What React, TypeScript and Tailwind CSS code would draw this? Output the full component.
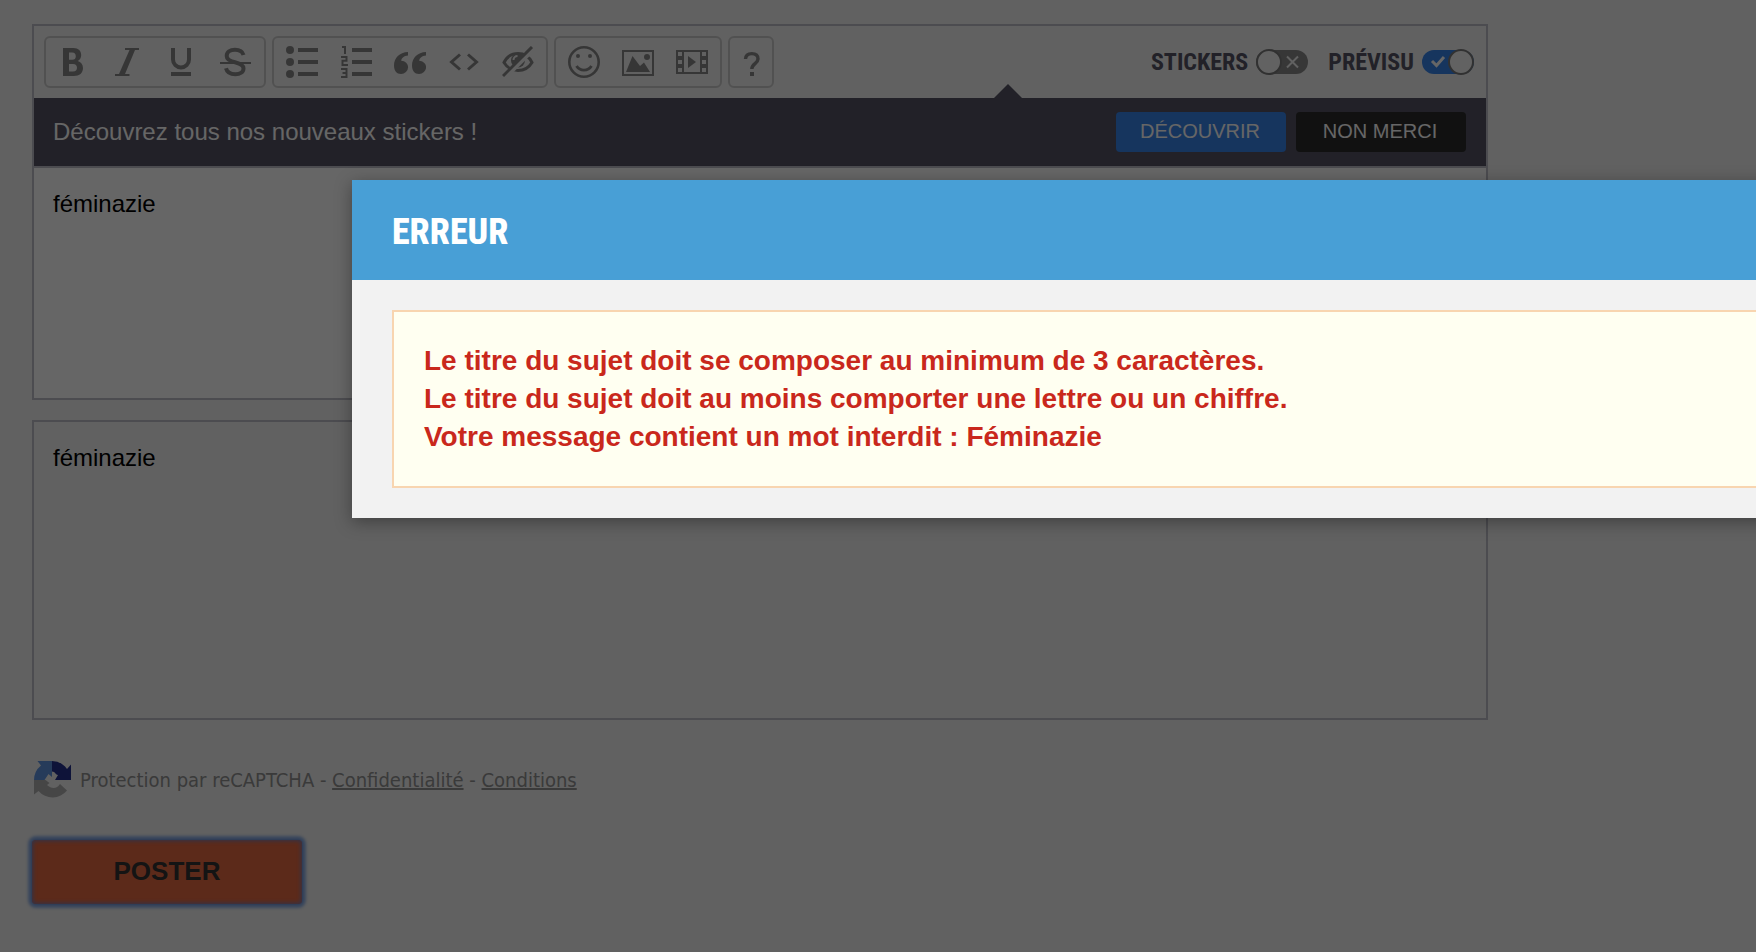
// Modules
import { useState } from "react";
import type { ReactNode } from "react";

type IToolButtonProps = {
  label: string;
  narrow?: boolean;
  children: ReactNode;
};

const ToolButton = ({ label, narrow, children }: IToolButtonProps) => (
  <button
    type="button"
    aria-label={label}
    title={label}
    className={`${
      narrow ? "w-10" : "w-[54px]"
    } h-12 flex items-center justify-center text-[#888888]`}
  >
    <svg
      viewBox="0 0 32 32"
      className="w-8 h-8"
      fill="none"
      stroke="currentColor"
      strokeWidth="4"
    >
      {children}
    </svg>
  </button>
);

const ToolGroup = ({ children }: { children: ReactNode }) => (
  <div className="flex px-px border-2 border-[#cbcbcb] rounded-md">
    {children}
  </div>
);

type ISwitchProps = {
  id: string;
  label: string;
  checked: boolean;
  onChange: () => void;
};

const Switch = ({ id, label, checked, onChange }: ISwitchProps) => (
  <div className="flex items-center gap-2">
    <label
      htmlFor={id}
      className="font-['Roboto_Condensed','Liberation_Sans_Narrow',sans-serif] font-bold text-2xl leading-6 text-[#555364]"
    >
      {label}
    </label>
    <span className="relative w-[52px] h-[26px]">
      <input
        id={id}
        type="checkbox"
        role="switch"
        checked={checked}
        onChange={onChange}
        className="absolute inset-0 w-full h-full opacity-0 cursor-pointer"
      />
      <svg
        viewBox="0 0 52 26"
        className="w-full h-full pointer-events-none"
        fill="none"
      >
        <rect
          x="0"
          y="1"
          width="52"
          height="24"
          rx="12"
          fill={checked ? "#3784eb" : "#8b8b8b"}
        />
        {checked ? (
          <path d="M10 12l4.500 4.500L22 8" stroke="#ffffff" strokeWidth="3" />
        ) : (
          <path d="M31 7.500l11 11M42 7.500l-11 11" stroke="#f2f2f2" strokeWidth="2" />
        )}
        <circle
          cx={checked ? 39 : 13}
          cy="13"
          r="12"
          fill="#f6f6f6"
          stroke="#7c7c7c"
          strokeWidth="2"
        />
      </svg>
    </span>
  </div>
);

const Toolbar = () => (
  <div className="flex gap-1.5">
    <ToolGroup>
      <ToolButton label="Gras">
        <path
          d="M5 2h10.500c5 0 7.700 3 7.700 7 0 3-1.400 5-3.400 6 3 1 5.200 3.400 5.200 7 0 5-3.500 8-9 8H5zM11 6.500v7.300h3.200c2.400 0 3.600-1.300 3.600-3.600s-1.200-3.700-3.600-3.700zM11 18v7.500h4c2.700 0 4-1.300 4-3.700S17.700 18 15 18z"
          fill="currentColor"
          fillRule="evenodd"
          stroke="none"
        />
      </ToolButton>
      <ToolButton label="Italique">
        <path d="M13 2h14v2h-4L13 28h4.500v2H3v-2h4L17.500 4H13z" fill="currentColor" stroke="none" />
      </ToolButton>
      <ToolButton label="Souligné">
        <path d="M7 2v11.500a8 8 0 0 0 16 0V2" />
        <path d="M5 28h20" />
      </ToolButton>
      <ToolButton label="Barré">
        <path d="M23.500 9C22.500 5.500 19 3.800 15 3.800c-5 0-8.300 2.400-8.300 6.200 0 3.500 3 5 8.300 6.200 5.500 1.300 8.500 2.800 8.500 6.200 0 3.600-3.300 5.800-8.200 5.800-4.800 0-8.300-2-9.300-6" strokeWidth="4" />
        <path d="M0 17h31" strokeWidth="2" />
      </ToolButton>
    </ToolGroup>
    <ToolGroup>
      <ToolButton label="Liste à puces">
        <g fill="currentColor" stroke="none">
          <circle cx="4" cy="4" r="4" />
          <circle cx="4" cy="16" r="4" />
          <circle cx="4" cy="28" r="4" />
        </g>
        <path d="M12 4h20M12 16h20M12 28h20" />
      </ToolButton>
      <ToolButton label="Liste numérotée">
        <path d="M2 1h3v7M1 11h5.500v3.800H2.500v4.200H8M1 23h5.500v8H1M2.500 27h4" strokeWidth="2" />
        <path d="M12 4h20M12 16h20M12 28h20" />
      </ToolButton>
      <ToolButton label="Citation">
        <g fill="currentColor" stroke="none">
          <path id="quote" d="M14 6v3.500c-4 .3-6.500 2.500-6.800 5.300 4 .2 6.900 3 6.900 6.500A7 7 0 0 1 7 28c-4.300 0-7-3.500-7-8.500C0 12 5.500 6.300 14 6z" />
          <use href="#quote" x="18" />
        </g>
      </ToolButton>
      <ToolButton label="Code">
        <path d="M12 8.500L3.500 16l8.500 7.500M20 8.500l8.500 7.500-8.500 7.500" strokeWidth="3" />
      </ToolButton>
      <ToolButton label="Spoiler">
        <path d="M2 16.500C5 10.500 10 7.500 16 7.500s11 3 14 9c-3 5-8 8-14 8s-11-3-14-8z" strokeWidth="3" />
        <circle cx="16" cy="14.500" r="7" fill="currentColor" stroke="none" />
        <path d="M11.500 14a4 4 0 0 1 4-4" stroke="#f2f2f2" strokeWidth="2" />
        <path d="M3 32L33 2" stroke="#f2f2f2" strokeWidth="4" />
        <path d="M1 30L30 1" strokeWidth="3" />
      </ToolButton>
    </ToolGroup>
    <ToolGroup>
      <ToolButton label="Smileys">
        <circle cx="16" cy="16" r="14.700" strokeWidth="2.600" />
        <circle cx="10" cy="10" r="2" fill="currentColor" stroke="none" />
        <circle cx="22" cy="10" r="2" fill="currentColor" stroke="none" />
        <path d="M8.500 20c3.500 5.500 11.500 5.500 15 0" strokeWidth="2.800" />
      </ToolButton>
      <ToolButton label="Image">
        <path d="M1 5h30v24H1z" strokeWidth="2" />
        <path d="M4 26l6.500-16L18 20l4-3.500 6 9.500z" fill="currentColor" stroke="none" />
        <circle cx="25" cy="11" r="3" fill="currentColor" stroke="none" />
      </ToolButton>
      <ToolButton label="Vidéo">
        <path
          d="M0 4h32v24H0zM2 6v4h4V6zM2 14v4h4v-4zM2 22v4h4v-4zM8 6v20h16V6zM26 6v4h4V6zM26 14v4h4v-4zM26 22v4h4v-4z"
          fill="currentColor"
          fillRule="evenodd"
          stroke="none"
        />
        <path d="M12 10l8 6-8 6z" fill="currentColor" stroke="none" />
      </ToolButton>
    </ToolGroup>
    <ToolGroup>
      <ToolButton label="Aide" narrow>
        <path d="M10.500 13c.2-3.400 2.600-5.400 6.300-5.400 3.800 0 6.200 2 6.200 5.400 0 4.600-6.200 4.800-6.200 10" strokeWidth="3.400" />
        <path d="M17 26v4" />
      </ToolButton>
    </ToolGroup>
  </div>
);

const StickersBanner = () => (
  <div className="relative flex items-center justify-between h-[68px] pl-[19px] pr-5 bg-[#555364] text-white">
    <svg
      viewBox="0 0 28 14"
      className="absolute right-[464px] -top-3.5 w-7 h-3.5"
      fill="#555364"
    >
      <path d="M0 14L14 0l14 14z" />
    </svg>
    <p className="text-2xl leading-7">Découvrez tous nos nouveaux stickers !</p>
    <div className="flex gap-2.5">
      <button
        type="button"
        className="w-[170px] h-10 pb-0.5 pr-0.5 rounded bg-[#3784eb] text-xl leading-6"
      >
        DÉCOUVRIR
      </button>
      <button
        type="button"
        className="w-[170px] h-10 pb-0.5 pr-0.5 rounded bg-[#2b2b2b] text-xl leading-6"
      >
        NON MERCI
      </button>
    </div>
  </div>
);

const RecaptchaNotice = () => (
  <div className="flex items-center gap-2 font-['DejaVu_Sans_Condensed','DejaVu_Sans',sans-serif] text-xl leading-6 text-[#919191]">
    <svg viewBox="0 0 38 38" className="w-10 h-[38px]">
      <path d="M19 0H4.500L8 4.500A19 19 0 0 0 1 19h10.500l4-6L19 16z" fill="#5f93e0" />
      <path d="M19 0v10.500c3.500 0 3 3 6 3.500l-3 5h16V3.500L34 8A19 19 0 0 0 19 0z" fill="#25308f" />
      <path d="M1 19v14.500L5.500 30a18.500 18.500 0 0 0 28.500-.5L27 23c-3 4.500-8 5.500-13 1l2.500-2-4-3z" fill="#b0b0b0" />
    </svg>
    <p>
      Protection par reCAPTCHA -{" "}
      <a href="#confidentialite" className="underline">
        Confidentialité
      </a>{" "}
      -{" "}
      <a href="#conditions" className="underline">
        Conditions
      </a>
    </p>
  </div>
);

const ErrorDialog = () => (
  <div className="absolute inset-0 flex items-start pt-[180px] pl-88 overflow-hidden bg-black/60">
    <section
      role="alertdialog"
      aria-labelledby="error-title"
      className="w-full min-w-[1456px] shrink-0 bg-[#f2f2f2] shadow-[0_4px_16px_rgba(0,0,0,0.35)]"
    >
      <header className="flex items-center h-[100px] px-10 pt-1 bg-[#489fd6]">
        <h1
          id="error-title"
          className="font-['Roboto_Condensed','Liberation_Sans_Narrow',sans-serif] font-extrabold text-4xl text-white"
        >
          ERREUR
        </h1>
      </header>
      <div className="px-10 py-[30px]">
        <div className="p-[30px] border-2 border-[#f8d5b0] bg-[#fffff1] font-bold text-[28px] leading-[38px] text-[#c9281c]">
          <p>Le titre du sujet doit se composer au minimum de 3 caractères.</p>
          <p>Le titre du sujet doit au moins comporter une lettre ou un chiffre.</p>
          <p>Votre message contient un mot interdit : Féminazie</p>
        </div>
      </div>
    </section>
  </div>
);

const App = () => {
  const [message, setMessage] = useState("féminazie");
  const [stickers, setStickers] = useState(false);
  const [preview, setPreview] = useState(true);

  return (
    <div className="relative min-h-screen overflow-hidden bg-[#f2f2f2] font-['Liberation_Sans',Arial,sans-serif]">
      <main className="max-w-[1520px] px-8 py-6">
        <form onSubmit={(e) => e.preventDefault()}>
          <div className="border-2 border-[#bebec8]">
            <div className="flex items-center justify-between h-[72px] pl-2.5 pr-3">
              <Toolbar />
              <div className="flex gap-5">
                <Switch
                  id="stickers"
                  label="STICKERS"
                  checked={stickers}
                  onChange={() => setStickers(!stickers)}
                />
                <Switch
                  id="preview"
                  label="PRÉVISU"
                  checked={preview}
                  onChange={() => setPreview(!preview)}
                />
              </div>
            </div>
            <StickersBanner />
            <textarea
              aria-label="Message"
              value={message}
              onChange={(e) => setMessage(e.target.value)}
              className="block w-full h-[232px] px-[19px] py-5 border-t-2 border-[#bebec8] bg-white text-2xl leading-8 text-black resize-none"
            />
          </div>

          <div className="mt-5 h-[300px] px-[19px] py-5 border-2 border-[#bebec8] text-2xl leading-8 text-black">
            {message}
          </div>

          <div className="mt-[41px]">
            <RecaptchaNotice />
          </div>

          <button
            type="submit"
            className="block mt-[41px] pb-0.5 w-[270px] h-16 bg-[#e66941] font-bold text-[26px] text-[#333333] rounded-sm shadow-[0_0_2px_1px_#7396d6,0_0_3px_4px_#8fb0e6,inset_0_0_4px_1px_#7a7fb6]"
          >
            POSTER
          </button>
        </form>
      </main>
      <ErrorDialog />
    </div>
  );
};

export default App;
